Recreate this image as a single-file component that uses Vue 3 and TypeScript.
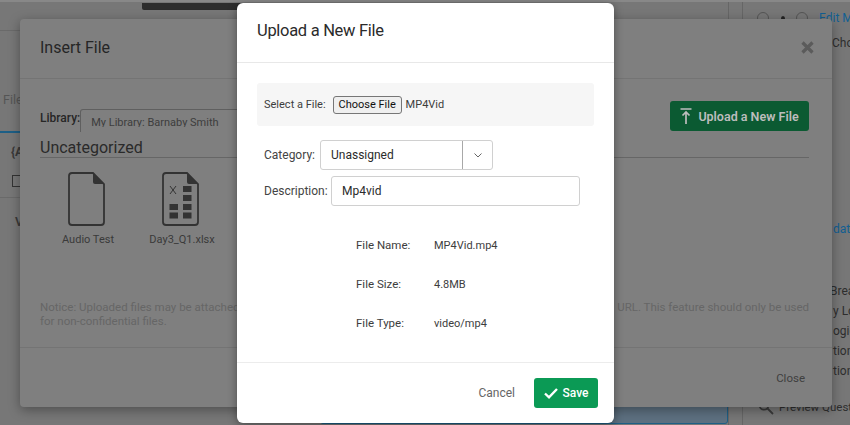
<script setup lang="ts">
const info = [
  { label: 'File Name:', value: 'MP4Vid.mp4' },
  { label: 'File Size:', value: '4.8MB' },
  { label: 'File Type:', value: 'video/mp4' },
]
const tools = ['Break', 'y Logic', 'ogic', 'tion', 'tion']
const sheetCells = [
  [183, 186], [183, 195], [183, 204], [183, 212.5], [169.5, 204], [169.5, 212.5],
]
</script>

<template>
  <div class="screen">
    <div class="page">
      <aside class="side">
        <div class="side-top"></div>
        <div class="side-tab">n File</div>
        <div class="side-token">{A</div>
        <div class="side-doc"><span class="doc-box"></span></div>
        <div class="side-v">V</div>
      </aside>
      <main class="center">
        <div class="top-bar"></div>
        <div class="selected-box"></div>
      </main>
      <aside class="panel">
        <div class="panel-head">
          <span class="ring"></span><span class="dot"></span><span class="ring"></span>
          <span class="link">Edit Mu</span>
        </div>
        <div class="panel-choice">Cho</div>
        <div class="panel-val link">dati</div>
        <ul class="panel-list">
          <li v-for="(t, i) in tools" :key="i" :class="'tool-' + i">{{ t }}</li>
        </ul>
        <div class="preview">
          <svg width="16" height="16" viewBox="0 0 16 16" fill="none" stroke="#3a3a3a" stroke-width="1.8">
            <circle cx="6" cy="6" r="4.6" />
            <path d="M9.5 9.5 15 15" />
          </svg>
          <span>Preview Questi</span>
        </div>
      </aside>
    </div>

    <section class="back-modal">
      <header class="back-head">
        <h2>Insert File</h2>
        <svg class="close-x" width="13" height="13" viewBox="0 0 13 13" stroke="#5b5b5b" stroke-width="3.2">
          <path d="M1.5 1.5 11.5 11.5M11.5 1.5 1.5 11.5" />
        </svg>
      </header>
      <div class="back-body">
        <div class="library-row">
          <b>Library:</b>
          <div class="library-select"><span>My Library: Barnaby Smith</span></div>
          <button class="upload-btn">
            <svg width="12" height="16" viewBox="0 0 12 16" fill="none" stroke="#bdbdbd" stroke-width="1.7">
              <path d="M0.5 1H11.5M6 16V4M2.5 7.5 6 4l3.500 3.500" />
            </svg>
            Upload a New File
          </button>
        </div>
        <h3>Uncategorized</h3>
        <div class="files">
          <figure class="file">
            <svg width="37" height="55" viewBox="68 172 37 55" fill="none">
              <path d="M72 173H93L104 184V222a3 3 0 0 1-3 3H72a3 3 0 0 1-3-3V176a3 3 0 0 1 3-3Z" stroke="#333" stroke-width="1.800" />
              <path d="M93 173 104 184H95a2 2 0 0 1-2-2Z" fill="#333" />
            </svg>
            <figcaption>Audio Test</figcaption>
          </figure>
          <figure class="file">
            <svg width="37" height="55" viewBox="162 172 37 55" fill="none">
              <path d="M166 173H187L198 184V222a3 3 0 0 1-3 3H166a3 3 0 0 1-3-3V176a3 3 0 0 1 3-3Z" stroke="#333" stroke-width="1.800" />
              <path d="M187 173 198 184H189a2 2 0 0 1-2-2Z" fill="#333" />
              <path d="M170 186 176 194M176 186 170 194" stroke="#333" stroke-width="1" />
              <rect v-for="(c, i) in sheetCells" :key="i" :x="c[0]" :y="c[1]" width="8.500" height="6" fill="#333" />
            </svg>
            <figcaption>Day3_Q1.xlsx</figcaption>
          </figure>
        </div>
        <div class="notice">
          <p class="notice-first">
            <span>Notice: Uploaded files may be attached to your survey</span>
            <span>URL. This feature should only be used</span>
          </p>
          <p>for non-confidential files.</p>
        </div>
      </div>
      <footer class="back-foot">Close</footer>
    </section>

    <section class="front-modal">
      <header class="front-head">Upload a New File</header>
      <div class="front-body">
        <div class="file-band">
          <span>Select a File:</span>
          <button class="choose">Choose File</button>
          <span>MP4Vid</span>
        </div>
        <div class="field category">
          <label>Category:</label>
          <div class="select">
            <span class="select-value">Unassigned</span>
            <span class="select-arrow">
              <svg width="8" height="5" viewBox="0 0 8 5" fill="none" stroke="#666" stroke-width="1">
                <path d="M.5.5 4 4 7.500.5" />
              </svg>
            </span>
          </div>
        </div>
        <div class="field description">
          <label>Description:</label>
          <div class="input">Mp4vid</div>
        </div>
        <dl class="info">
          <div v-for="row in info" :key="row.label" class="info-row">
            <dt>{{ row.label }}</dt>
            <dd>{{ row.value }}</dd>
          </div>
        </dl>
      </div>
      <footer class="front-foot">
        <button class="cancel">Cancel</button>
        <button class="save">
          <svg width="14" height="11" viewBox="0 0 14 11" fill="none" stroke="#fff" stroke-width="2.400">
            <path d="M1 5.500 5 9.300 13 1" />
          </svg>
          Save
        </button>
      </footer>
    </section>
  </div>
</template>

<style scoped>
.screen {
  position: relative;
  width: 850px;
  height: 425px;
  overflow: hidden;
  background: #777;
  font-family: Roboto, "Noto Sans", sans-serif;
  color: #2e2e2e;
}
h2, h3, p, ul, dl, dd, figure { margin: 0; padding: 0; font-weight: 400; }
button { font-family: inherit; }

/* page under the dialogs */
.page {
  display: flex;
  height: 425px;
  border-top: 2px solid #888;
  box-sizing: border-box;
}
.side {
  width: 20px;
  flex: none;
  overflow: hidden;
  white-space: nowrap;
  font-size: 12.500px;
  color: #3a3a3a;
}
.side-top { height: 28px; border-bottom: 1px solid #6a6a6a; }
.side-tab {
  height: 40px;
  padding-top: 60px;
  margin-left: -7px;
  border-bottom: 2px solid #1d5f86;
  color: #555;
  line-height: 18px;
}
.side-token { margin: 12px 0 0 11px; font-weight: 700; line-height: 14px; }
.side-doc { height: 39px; padding: 16px 0 0 12px; border-bottom: 1px solid #6a6a6a; box-sizing: border-box; }
.doc-box { display: block; width: 12px; height: 10px; border: 1.500px solid #333; }
.side-v { margin: 16px 0 0 15px; font-weight: 600; }
.center {
  width: 708px;
  flex: none;
  display: flex;
  flex-direction: column;
  border-right: 1px solid #666;
}
.top-bar {
  width: 110px;
  height: 7px;
  margin: 1px 0 0 122px;
  background: #2d2d2d;
  border-radius: 0 0 0 2px;
}
.selected-box {
  margin: auto 0 1px 300px;
  height: 24px;
  background: #5d7080;
  border: 1px solid #1d5f86;
  border-radius: 0 0 3px 3px;
  box-sizing: border-box;
}
.panel {
  width: 107px;
  flex: none;
  margin-left: 13px;
  border-left: 1px solid #666;
  overflow: hidden;
  white-space: nowrap;
  font-size: 12px;
  color: #2e2e2e;
  display: flex;
  flex-direction: column;
}
.panel-head { display: flex; align-items: center; height: 32px; padding: 0 0 0 14px; }
.ring { flex: none; width: 12px; height: 12px; box-sizing: border-box; border: 1px solid #555; border-radius: 50%; }
.dot { flex: none; width: 4px; height: 5px; margin: 0 11px 0 12px; background: #222; border-radius: 50%; }
.link { color: #125f93; flex: none; }
.panel-head .link { margin-left: 11px; }
.panel-choice { padding-left: 89px; line-height: 16px; margin-top: 1px; }
.panel-val { padding-left: 90px; margin-top: 170px; line-height: 16px; }
.panel-list { list-style: none; margin-top: 44px; }
.panel-list li { line-height: 20px; }
.tool-0 { padding-left: 87px; }
.tool-1, .tool-2, .tool-3, .tool-4 { padding-left: 90px; }
.preview { display: flex; align-items: center; gap: 5px; padding-left: 15px; margin-top: 18px; font-size: 11.500px; }
.preview svg, .preview span { flex: none; }

/* Insert File dialog */
.back-modal {
  position: absolute;
  left: 20px;
  top: 19px;
  width: 812px;
  height: 388px;
  display: flex;
  flex-direction: column;
  background: #7f7f7f;
  border-radius: 4px;
  box-shadow: 0 3px 12px rgba(0, 0, 0, .35);
}
.back-head {
  flex: none;
  height: 56px;
  padding: 0 18px 3px 20px;
  display: flex;
  align-items: center;
  justify-content: space-between;
  border-bottom: 1px solid #747474;
}
.back-head h2 { font-size: 16px; color: #262626; }
.back-body { flex: 1; padding: 22px 23px 0 20px; display: flex; flex-direction: column; }
.library-row { display: flex; align-items: flex-start; height: 38px; font-size: 12px; color: #262626; }
.library-row b { margin-top: 9px; font-weight: 500; line-height: 16px; }
.library-select {
  width: 300px;
  height: 22px;
  margin: 8px 0 0;
  border: 1px solid #5f5f5f;
  border-bottom: 0;
  border-radius: 3px 0 0 0;
  padding-left: 10px;
  color: #3d3d3d;
}
.library-select span { display: block; height: 16px; margin-top: 1px; overflow: hidden; line-height: 24px; font-size: 11px; }
.upload-btn {
  margin-left: auto;
  width: 139px;
  height: 30px;
  padding: 0;
  display: flex;
  align-items: center;
  justify-content: center;
  gap: 6px;
  background: #0b5a32;
  border: 0;
  border-radius: 3px;
  color: #bdbdbd;
  font-size: 12.500px;
  font-weight: 600;
}
.back-body h3 {
  height: 18px;
  line-height: 18px;
  font-size: 16px;
  color: #2a2a2a;
  border-bottom: 1px solid #666;
}
.files { display: flex; gap: 54px; margin-top: 14px; padding-left: 28px; }
.file { width: 40px; display: flex; flex-direction: column; align-items: center; white-space: nowrap; font-size: 11px; color: #3a3a3a; }
.file svg { display: block; margin-left: -3px; }
.file figcaption { margin-top: 6px; line-height: 14px; }
.notice { margin-top: 53px; font-size: 11.500px; line-height: 14px; color: #666; }
.notice-first { display: flex; justify-content: space-between; }
.back-foot {
  flex: none;
  height: 60px;
  border-top: 1px solid #747474;
  box-sizing: border-box;
  padding: 22px 27px 0 0;
  text-align: right;
  font-size: 11.500px;
  line-height: 16px;
  color: #404040;
}

/* Upload dialog */
.front-modal {
  position: absolute;
  left: 237px;
  top: 3px;
  width: 377px;
  height: 420px;
  display: flex;
  flex-direction: column;
  background: #fff;
  border-radius: 6px;
  box-shadow: 0 2px 10px rgba(0, 0, 0, .4);
}
.front-head {
  flex: none;
  height: 60px;
  box-sizing: border-box;
  padding-left: 20px;
  line-height: 56px;
  font-size: 16.500px;
  letter-spacing: -.3px;
  color: #2b2b2b;
  border-bottom: 1px solid #e8e8e8;
}
.front-body { flex: 1; padding: 20px 20px 0; }
.file-band {
  height: 43px;
  display: flex;
  align-items: center;
  padding-left: 7px;
  background: #f6f6f6;
  border-radius: 3px;
  font-size: 11px;
  color: #3d3d3d;
}
.choose {
  width: 69px;
  height: 18px;
  margin: 0 4px 0 7px;
  padding: 0;
  background: #efefef;
  border: 1px solid #767676;
  border-radius: 3px;
  font-size: 11px;
  color: #111;
}
.field { display: flex; align-items: center; margin-left: 7px; font-size: 12px; color: #444; }
.category { margin-top: 14px; }
.category label { width: 56px; }
.description { margin-top: 6px; }
.description label { width: 67px; }
.select {
  width: 173px;
  height: 30px;
  box-sizing: border-box;
  display: flex;
  border: 1px solid #d0d0d0;
  border-radius: 3px;
  color: #2b2b2b;
}
.select-value { flex: 1; padding-left: 10px; line-height: 28px; font-size: 12px; }
.select-arrow {
  width: 29px;
  display: flex;
  align-items: center;
  justify-content: center;
  border-left: 1px solid #a8a8a8;
}
.input {
  width: 249px;
  height: 30px;
  box-sizing: border-box;
  padding-left: 10px;
  border: 1px solid #d0d0d0;
  border-radius: 3px;
  line-height: 28px;
  font-size: 12px;
  color: #2b2b2b;
}
.info { margin: 20px 0 0 99px; font-size: 11.500px; color: #3d3d3d; }
.info-row { display: flex; height: 39px; line-height: 39px; }
.info-row dt { width: 78px; }
.info-row dd { font-size: 11px; }
.front-foot {
  flex: none;
  height: 61px;
  box-sizing: border-box;
  border-top: 1px solid #ececec;
  display: flex;
  align-items: center;
  justify-content: flex-end;
  gap: 19px;
  padding: 0 16px 0 0;
}
.cancel {
  padding: 0;
  background: none;
  border: 0;
  font-size: 12px;
  color: #666;
}
.save {
  width: 64px;
  height: 30px;
  padding: 0;
  display: flex;
  align-items: center;
  justify-content: center;
  gap: 5px;
  background: #0b9a55;
  border: 0;
  border-radius: 3px;
  color: #fff;
  font-size: 12px;
  font-weight: 500;
}
</style>
